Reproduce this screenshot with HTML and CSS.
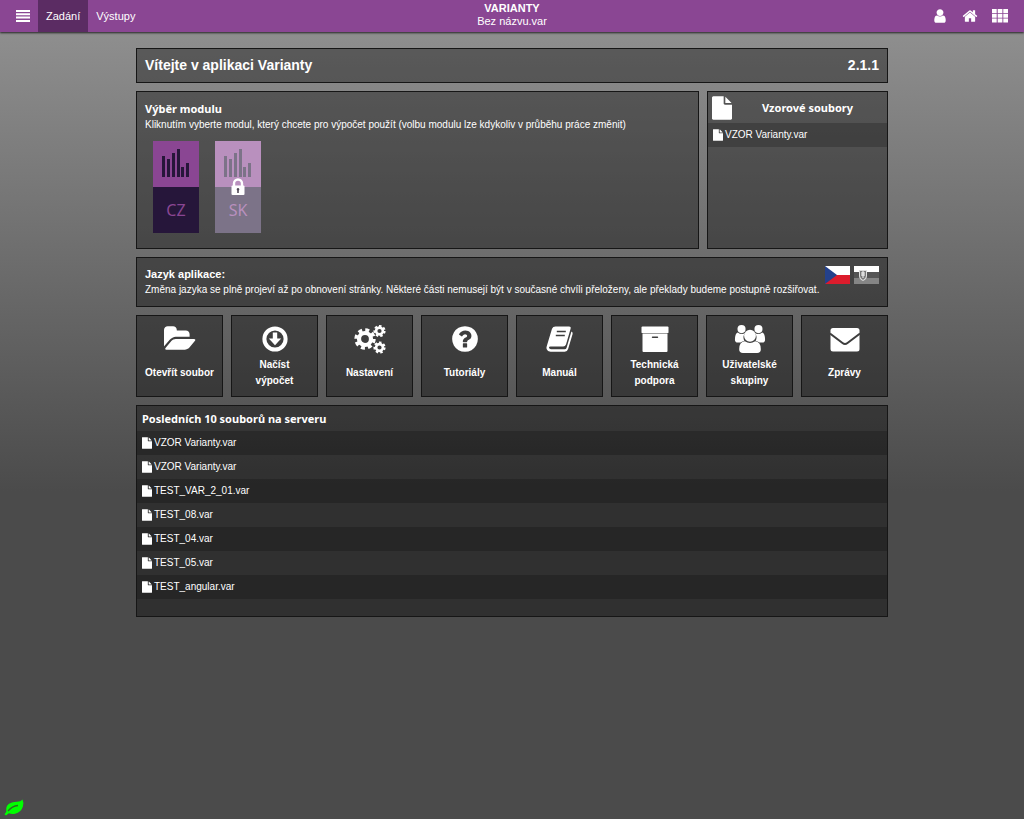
FILE: index.html
```html
<!DOCTYPE html>
<html lang="cs">
<head>
<meta charset="utf-8">
<title>Varianty</title>
<link rel="stylesheet" href="styles.css">
</head>
<body>
<svg class="defs" aria-hidden="true">
  <symbol id="file" viewBox="128 0 1536 1792"><path d="M1152 512v-472q22 14 36 28l408 408q14 14 28 36h-472zm-128 32q0 40 28 68t68 28h544v1056q0 40-28 68t-68 28h-1344q-40 0-68-28t-28-68v-1600q0-40 28-68t68-28h800v544z"/></symbol>
  <symbol id="bars" viewBox="0 0 46 46"><path d="M9 15h3v21H9zM14 18h3v18h-3zM19 12h3v24h-3zM24 8h3v28h-3zM28 26h3v10h-3zM33 22h3v14h-3z"/></symbol>
</svg>
<header class="topbar">
  <nav class="menu">
    <button class="icon-btn burger" aria-label="Menu"><svg width="14" height="12" viewBox="0 0 14 12"><path d="M0 0h14v2H0zM0 3.300h14v2H0zM0 6.600h14v2H0zM0 9.900h14v2H0z"/></svg></button>
    <a class="tab active" href="#zadani">Zadání</a>
    <a class="tab" href="#vystupy">Výstupy</a>
  </nav>
  <div class="doc"><strong>VARIANTY</strong><span>Bez názvu.var</span></div>
  <div class="tools">
    <button class="icon-btn" aria-label="Uživatel"><svg width="16" height="16" viewBox="0 0 1792 1792"><path d="M1536 1399q0 109-62.500 187t-150.500 78h-854q-88 0-150.500-78t-62.500-187q0-85 8.500-160.500t31.500-152 58.500-131 94-89 134.500-34.500q131 128 313 128t313-128q76 0 134.500 34.500t94 89 58.500 131 31.500 152 8.500 160.500zm-256-887q0 159-112.500 271.500t-271.500 112.500-271.500-112.500-112.500-271.500 112.500-271.500 271.500-112.500 271.500 112.500 112.500 271.500z"/></svg></button>
    <button class="icon-btn" aria-label="Domů"><svg width="16" height="16" viewBox="0 0 1792 1792"><path d="M1472 992v480q0 26-19 45t-45 19h-384v-384h-256v384h-384q-26 0-45-19t-19-45v-480q0-1 .5-3t.5-3l575-474 575 474q1 2 1 6zm223-69l-62 74q-8 9-21 11h-3q-13 0-21-7l-692-577-692 577q-12 8-24 7-13-2-21-11l-62-74q-8-10-7-23.500t11-21.500l719-599q32-26 76-26t76 26l244 204v-195q0-14 9-23t23-9h192q14 0 23 9t9 23v408l219 182q10 8 11 21.500t-7 23.500z"/></svg></button>
    <button class="icon-btn" aria-label="Aplikace"><svg width="16" height="14" viewBox="0 0 16 14"><path d="M0 0h4.700v4H0zM5.700 0h4.700v4H5.700zM11.300 0H16v4h-4.700zM0 4.800h4.700v4H0zM5.700 4.800h4.700v4H5.700zM11.300 4.800H16v4h-4.700zM0 9.600h4.700v4H0zM5.700 9.600h4.700v4H5.700zM11.300 9.600H16v4h-4.700z"/></svg></button>
  </div>
</header>

<main class="page">
  <section class="panel welcome"><h1>Vítejte v aplikaci Varianty</h1><span>2.1.1</span></section>

  <div class="split">
    <section class="panel modules">
      <h2 class="heading">Výběr modulu</h2>
      <p>Kliknutím vyberte modul, který chcete pro výpočet použít (volbu modulu lze kdykoliv v průběhu práce změnit)</p>
      <div class="module-list">
        <button class="module"><svg class="chart"><use href="#bars"/></svg><span>CZ</span></button>
        <button class="module locked"><svg class="chart"><use href="#bars"/></svg><span>SK</span>
          <svg class="lock" width="14" height="18" viewBox="0 0 14 18"><path d="M3 8V5.500a4 4 0 0 1 8 0V8" fill="none" stroke="#fff" stroke-width="2.400"/><rect x="0.500" y="7.500" width="13" height="9.500" rx="1"/><path d="M7 10a1.400 1.400 0 0 1 .8 2.500V15H6.200v-2.500A1.400 1.400 0 0 1 7 10z" fill="#514856"/></svg>
        </button>
      </div>
    </section>
    <section class="panel samples">
      <div class="samples-head"><svg width="20" height="24"><use href="#file"/></svg><h2 class="heading">Vzorové soubory</h2></div>
      <a class="file" href="#vzor"><svg width="10" height="12"><use href="#file"/></svg>VZOR Varianty.var</a>
    </section>
  </div>

  <section class="panel language">
    <div>
      <h2>Jazyk aplikace:</h2>
      <p>Změna jazyka se plně projeví až po obnovení stránky. Některé části nemusejí být v současné chvíli přeloženy, ale překlady budeme postupně rozšiřovat.</p>
    </div>
    <div class="flags">
      <button aria-label="Čeština"><svg width="25" height="18" viewBox="0 0 25 18"><path fill="#fff" d="M0 0h25v9H0z"/><path fill="#dc1c2c" d="M0 9h25v9H0z"/><path fill="#24418c" d="M0 0l12 9-12 9z"/></svg></button>
      <button aria-label="Slovenčina"><svg width="25" height="18" viewBox="0 0 25 18"><path fill="#fff" d="M0 0h25v6H0z"/><path fill="#555" d="M0 6h25v6H0z"/><path fill="#858585" d="M0 12h25v6H0z"/><path fill="#ddd" d="M5 4h8v6q0 3-4 5-4-2-4-5z"/><path fill="#777" d="M6 5h6v5q0 2-3 4-3-2-3-4z"/><path stroke="#fff" d="M9 5v7M7 7h4M7 9h4"/></svg></button>
    </div>
  </section>

  <nav class="tiles">
    <button class="panel tile"><svg width="32" height="30" viewBox="0 0 1920 1792"><path d="M1879 952q0 31-31 66l-336 396q-43 51-120.500 86.500t-143.500 35.500h-1088q-34 0-60.500-13t-26.500-43q0-31 31-66l336-396q43-51 120.500-86.500t143.500-35.500h1088q34 0 60.500 13t26.500 43zm-343-344v160h-832q-94 0-197 47.500t-164 119.500l-337 396-5 6q0-4-.5-12.500t-.5-12.500v-960q0-92 66-158t158-66h320q92 0 158 66t66 158v32h544q92 0 158 66t66 158z"/></svg><span>Otevřít soubor</span></button>
    <button class="panel tile"><svg width="30" height="30" viewBox="0 0 30 30"><circle cx="15" cy="15" r="10.600" fill="none" stroke="#fff" stroke-width="4"/><path d="M12.800 8.500h4.400v6h4L15 21.300 8.800 14.500h4z"/></svg><span>Načíst výpočet</span></button>
    <button class="panel tile"><svg width="32" height="30" viewBox="0 0 32 30"><g fill="none" stroke="#fff"><circle cx="11" cy="15" r="6" stroke-width="4.200"/><circle cx="11" cy="15" r="9" stroke-width="3.400" stroke-dasharray="3.930 3.139"/><circle cx="25.500" cy="7" r="3.400" stroke-width="2.600"/><circle cx="25.500" cy="7" r="5" stroke-width="2.200" stroke-dasharray="2.440 2.048"/><circle cx="25.500" cy="23.500" r="3.400" stroke-width="2.600"/><circle cx="25.500" cy="23.500" r="5" stroke-width="2.200" stroke-dasharray="2.440 2.048"/></g></svg><span>Nastavení</span></button>
    <button class="panel tile"><svg width="30" height="30" viewBox="0 0 1792 1792"><path d="M1024 1376v-192q0-14-9-23t-23-9h-192q-14 0-23 9t-9 23v192q0 14 9 23t23 9h192q14 0 23-9t9-23zm256-672q0-88-55.500-163t-138.500-116-170-41q-243 0-371 213-15 24 8 42l132 100q7 6 19 6 16 0 25-12 53-68 86-92 34-24 86-24 48 0 85.500 26t37.500 59q0 38-20 61t-68 45q-63 28-115.500 86.500t-52.500 125.500v36q0 14 9 23t23 9h192q14 0 23-9t9-23q0-19 21.500-49.500t54.500-49.500q32-18 49-28.500t46-35 44.500-48 28-60.500 12.500-81zm384 192q0 209-103 385.500t-279.500 279.500-385.500 103-385.500-103-279.500-279.500-103-385.500 103-385.500 279.500-279.500 385.500-103 385.500 103 279.500 279.500 103 385.500z"/></svg><span>Tutoriály</span></button>
    <button class="panel tile"><svg width="30" height="30" viewBox="0 0 30 30"><path d="M10.500 2.500H24q2.200 0 1.600 2.300L21 20.500q-.7 2-2.800 2H5.500q-1.700 0-1.500 1.300.3 1.400 2 1.400h13.700q1.400 0 1.900-1.500L26.400 7.500q1.700.7 1.200 2.600l-4.500 15q-.8 2.700-3.400 2.700H5.500q-3 0-3.900-2.700-.4-1.500.2-3L7 4.800q.9-2.300 3.500-2.300z"/><path d="M11.800 7.500h9M10.800 11.500h9" stroke="#3d3d3d" stroke-width="1.600"/></svg><span>Manuál</span></button>
    <button class="panel tile"><svg width="30" height="30" viewBox="0 0 30 30"><path d="M2.500 2.500h25q1 0 1 1v5q0 .5-1 .5h-25q-1 0-1-.5v-5q0-1 1-1z"/><path fill-rule="evenodd" d="M2.500 9.600h25V27q0 1-1 1h-23q-1 0-1-1zM12.500 12.500q-.7 0-.7.800t.7.800h5q.7 0 .7-.8t-.7-.8z"/></svg><span>Technická podpora</span></button>
    <button class="panel tile"><svg width="32" height="30" viewBox="0 0 34 30"><circle cx="8" cy="4.500" r="4.300"/><circle cx="26" cy="4.500" r="4.300"/><path d="M4 8q4 3 8 .5-2 2-2 4.500 0 2 1 4-2 0-4 1.800H4q-3 0-3-3Q1 9 4 8zM30 8q-4 3-8 .5 2 2 2 4.500 0 2-1 4 2 0 4 1.800h3q3 0 3-3Q33 9 30 8z"/><circle cx="17" cy="11.500" r="6.300"/><path d="M11.500 17.500q5.500 3.500 11 0 6 .5 6 8.500 0 4-4 4h-15q-4 0-4-4 0-8 6-8.500z"/></svg><span>Uživatelské skupiny</span></button>
    <button class="panel tile"><svg width="30" height="30" viewBox="0 0 30 30"><rect x="0.500" y="4" width="29" height="23.500" rx="2.500"/><path d="M0 9.500l12.500 9.500q2.500 2 5 0L30 9.500" fill="none" stroke="#3d3d3d" stroke-width="2"/></svg><span>Zprávy</span></button>
  </nav>

  <section class="panel recent">
    <h2 class="heading">Posledních 10 souborů na serveru</h2>
    <a class="file" href="#f1"><svg width="10" height="12"><use href="#file"/></svg>VZOR Varianty.var</a>
    <a class="file" href="#f2"><svg width="10" height="12"><use href="#file"/></svg>VZOR Varianty.var</a>
    <a class="file" href="#f3"><svg width="10" height="12"><use href="#file"/></svg>TEST_VAR_2_01.var</a>
    <a class="file" href="#f4"><svg width="10" height="12"><use href="#file"/></svg>TEST_08.var</a>
    <a class="file" href="#f5"><svg width="10" height="12"><use href="#file"/></svg>TEST_04.var</a>
    <a class="file" href="#f6"><svg width="10" height="12"><use href="#file"/></svg>TEST_05.var</a>
    <a class="file" href="#f7"><svg width="10" height="12"><use href="#file"/></svg>TEST_angular.var</a>
  </section>
</main>
<svg class="leaf" width="20" height="17" viewBox="0 0 20 17"><path d="M18.500.5q1.500 3 .4 7-1.800 6-7.900 7.300-3.500.6-6.200-.6L2 16.500.5 15.300l1.800-2.600Q1 5 8 3.400q2-.5 5-.6 4 0 5.500-2.300z"/><path d="M4 12q4-5 10-5.500" fill="none" stroke="#2c6b24" stroke-width="1.300"/></svg>
</body>
</html>
```
FILE: styles.css
```css
* { box-sizing: border-box; }

body {
  margin: 0;
  min-height: 100vh;
  background: linear-gradient(#939393, #4b4b4b 60%);
  color: #fff;
  font: 10px/16px "Liberation Sans", Arial, sans-serif;
}

h1, h2, p { margin: 0; }
svg { display: block; fill: #fff; }
a { color: inherit; text-decoration: none; }
button {
  padding: 0;
  border: 0;
  background: none;
  color: inherit;
  font: inherit;
  cursor: pointer;
}
.defs { position: absolute; width: 0; height: 0; }

.topbar {
  display: grid;
  grid-template-columns: 1fr auto 1fr;
  height: 32px;
  background: #8a4693;
  box-shadow: 0 1px 2px #222;
}
.menu { display: flex; }
.burger { padding: 0 8px 0 16px; }
.tab { padding: 0 8px; font-size: 11px; line-height: 32px; }
.active { background: #5b2c63; }
.doc {
  display: flex;
  flex-direction: column;
  padding-top: 2px;
  font-size: 11px;
  line-height: 13px;
  text-align: center;
}
.tools {
  display: flex;
  justify-content: flex-end;
  align-items: center;
  gap: 14px;
  padding-right: 16px;
}

.page {
  display: flex;
  flex-direction: column;
  gap: 8px;
  max-width: 752px;
  margin: 16px auto 0;
}
.panel { border: 1px solid #161616; background: rgba(0, 0, 0, 0.36); }
.heading { font: bold 11px/16px "Noto Sans", "Open Sans", sans-serif; }

.welcome {
  display: flex;
  justify-content: space-between;
  padding: 8px;
  font-size: 14px;
  font-weight: bold;
  line-height: 17px;
}
.welcome h1 { font-size: inherit; }

.split { display: grid; grid-template-columns: 1fr 181px; gap: 8px; }
.modules { padding: 9px 8px 15px; }
.module-list { display: flex; gap: 16px; padding: 8px 8px 0; }
.module { position: relative; width: 46px; background: #26163a; color: #8a4693; }
.chart { width: 46px; height: 46px; background: #8a4693; fill: #26163a; }
.module span { display: block; font: 16px/46px "Noto Sans", sans-serif; }
.locked::after { content: ""; position: absolute; inset: 0; background: rgba(255, 255, 255, 0.4); }
.lock { position: absolute; z-index: 1; left: 16px; top: 37px; }

.samples-head { display: flex; align-items: center; height: 31px; padding: 0 4px; }
.samples-head .heading { flex: 1; text-align: center; }
.file { display: flex; align-items: center; gap: 2px; height: 24px; padding: 0 5px; }
.samples .file { background: rgba(0, 0, 0, 0.2); }

.language { display: flex; justify-content: space-between; padding: 8px; }
.language h2 { font-size: 11px; }
.flags { display: flex; align-items: flex-start; gap: 4px; }

.tiles { display: grid; grid-template-columns: repeat(8, 1fr); gap: 8px; }
.tile {
  display: flex;
  flex-direction: column;
  align-items: center;
  height: 82px;
  padding: 8px 8px 0;
  font-weight: bold;
}
.tile span { display: flex; align-items: center; height: 37px; }

.recent { padding-bottom: 17px; }
.recent .heading { padding: 5px 5px 4px; }
.recent .file:nth-child(even) { background: rgba(0, 0, 0, 0.2); }

.leaf { position: fixed; left: 4px; bottom: 3px; fill: #0f0; }
```
